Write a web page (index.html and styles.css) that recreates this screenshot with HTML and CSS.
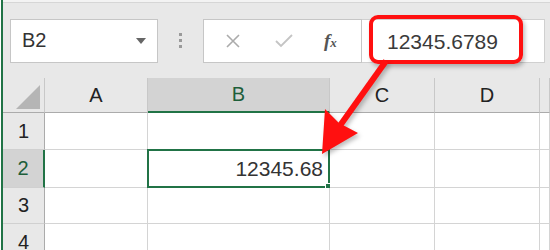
FILE: index.html
```html
<!DOCTYPE html>
<html lang="en">
<head>
    <meta charset="UTF-8">
    <title>Excel - Number Format</title>
    <link rel="stylesheet" href="styles.css">
</head>
<body>
    <div class="app">
        <div class="top-edge"></div>
        <div class="formula-row">
            <div class="name-box">
                <span>B2</span>
                <span class="caret"></span>
            </div>
            <div class="grip">
                <i></i><i></i><i></i>
            </div>
            <div class="fx-buttons">
                <svg class="btn-icon" width="16" height="16" viewBox="0 0 16 16">
                    <path d="M2 2 L14 14 M14 2 L2 14" stroke="#ababab" stroke-width="1.6" fill="none"/>
                </svg>
                <svg class="btn-icon" width="20" height="16" viewBox="0 0 20 16">
                    <path d="M2 8 L7 13 L18 2" stroke="#c4c4c4" stroke-width="1.8" fill="none"/>
                </svg>
                <span class="fx">f<small>x</small></span>
            </div>
            <div class="formula-input">12345.6789</div>
        </div>
        <div class="grid">
            <div class="corner"><span class="tri"></span></div>
            <div class="col-head">A</div>
            <div class="col-head active">B</div>
            <div class="col-head">C</div>
            <div class="col-head">D</div>
            <div class="col-head"></div>

            <div class="row-head">1</div>
            <div class="cell"></div>
            <div class="cell"></div>
            <div class="cell"></div>
            <div class="cell"></div>
            <div class="cell"></div>

            <div class="row-head active">2</div>
            <div class="cell"></div>
            <div class="cell selected">12345.68<span class="handle"></span></div>
            <div class="cell"></div>
            <div class="cell"></div>
            <div class="cell"></div>

            <div class="row-head">3</div>
            <div class="cell"></div>
            <div class="cell"></div>
            <div class="cell"></div>
            <div class="cell"></div>
            <div class="cell"></div>

            <div class="row-head">4</div>
            <div class="cell"></div>
            <div class="cell"></div>
            <div class="cell"></div>
            <div class="cell"></div>
            <div class="cell"></div>
        </div>

        <div class="callout"></div>
        <svg class="arrow" width="550" height="250" viewBox="0 0 550 250">
            <line x1="386" y1="61" x2="339" y2="127" stroke="#ff1010" stroke-width="6"/>
            <polygon points="322,154 325,109 339,123 358,133" fill="#ff1010"/>
        </svg>
    </div>
</body>
</html>
```

FILE: styles.css
```css
body {
    margin: 0;
    padding: 0;
    font-family: "Liberation Sans", Arial, sans-serif;
    background-color: #fff;
}
.app {
    position: relative;
    width: 549px;
    height: 250px;
    margin-left: 1px;
    border-left: 2px solid #217346;
    background-color: #e8e8e8;
    overflow: hidden;
    box-sizing: border-box;
}
.top-edge {
    height: 2px;
    background-color: #f3f3f3;
    border-bottom: 1px solid #d6d6d6;
}
.formula-row {
    display: flex;
    align-items: center;
    height: 75px;
    padding: 0 5px 0 7px;
    box-sizing: border-box;
}
.name-box {
    display: flex;
    align-items: center;
    justify-content: space-between;
    width: 148px;
    height: 44px;
    padding: 0 11px 0 11px;
    box-sizing: border-box;
    background-color: #fff;
    border: 1px solid #c6c6c6;
    font-size: 20px;
    color: #333;
}
.caret {
    width: 0;
    height: 0;
    border-left: 5px solid transparent;
    border-right: 5px solid transparent;
    border-top: 6px solid #666;
}
.grip {
    display: flex;
    flex-direction: column;
    align-items: center;
    gap: 3px;
    width: 45px;
}
.grip i {
    display: block;
    width: 3px;
    height: 3px;
    background-color: #9a9a9a;
}
.fx-buttons {
    display: flex;
    align-items: center;
    width: 159px;
    height: 44px;
    padding-left: 21px;
    gap: 33px;
    box-sizing: border-box;
    background-color: #fff;
    border: 1px solid #c6c6c6;
}
.fx {
    font-family: "Liberation Serif", serif;
    font-style: italic;
    font-weight: bold;
    font-size: 19px;
    color: #555;
    margin-left: -3px;
}
.fx small {
    font-size: 13px;
}
.formula-input {
    flex: 1;
    height: 44px;
    line-height: 44px;
    padding-left: 25px;
    box-sizing: border-box;
    background-color: #fff;
    border: 1px solid #d0d0d0;
    border-left: none;
    font-size: 21px;
    color: #3a3a3a;
}
.grid {
    display: grid;
    grid-template-columns: 42px 103px 182px 105px 105px 1fr;
    grid-template-rows: 35px 37px 38px 36px 37px;
}
.corner {
    position: relative;
    border-right: 1px solid #c8c8c8;
    border-bottom: 1px solid #ababab;
}
.tri {
    position: absolute;
    right: 4px;
    bottom: 3px;
    width: 0;
    height: 0;
    border-left: 24px solid transparent;
    border-bottom: 24px solid #b5b5b5;
}
.col-head {
    display: flex;
    align-items: center;
    justify-content: center;
    border-right: 1px solid #c8c8c8;
    border-bottom: 1px solid #ababab;
    font-size: 20px;
    color: #222;
}
.col-head.active {
    background-color: #d3d3d3;
    border-bottom: 2px solid #217346;
    color: #1d5e3a;
}
.row-head {
    display: flex;
    align-items: center;
    justify-content: center;
    border-right: 1px solid #ababab;
    border-bottom: 1px solid #d0d0d0;
    font-size: 20px;
    color: #222;
}
.row-head.active {
    background-color: #d3d3d3;
    border-right: 2px solid #217346;
    color: #1d5e3a;
}
.cell {
    position: relative;
    display: flex;
    align-items: center;
    justify-content: flex-end;
    padding-right: 5px;
    background-color: #fff;
    border-right: 1px solid #d4d4d4;
    border-bottom: 1px solid #d4d4d4;
    font-size: 21px;
    color: #333;
}
.cell.selected {
    border: 2px solid #217346;
    margin: -1px 0 0 -1px;
}
.handle {
    position: absolute;
    right: -5px;
    bottom: -5px;
    width: 6px;
    height: 6px;
    background-color: #217346;
    border: 1px solid #fff;
}
.callout {
    position: absolute;
    left: 366px;
    top: 15px;
    width: 154px;
    height: 49px;
    box-sizing: border-box;
    border: 4px solid #ff1010;
    border-radius: 9px;
    box-shadow: 2px 3px 4px rgba(0, 0, 0, 0.25);
}
.arrow {
    position: absolute;
    left: -3px;
    top: 0;
    filter: drop-shadow(2px 3px 2px rgba(0, 0, 0, 0.25));
}
```
